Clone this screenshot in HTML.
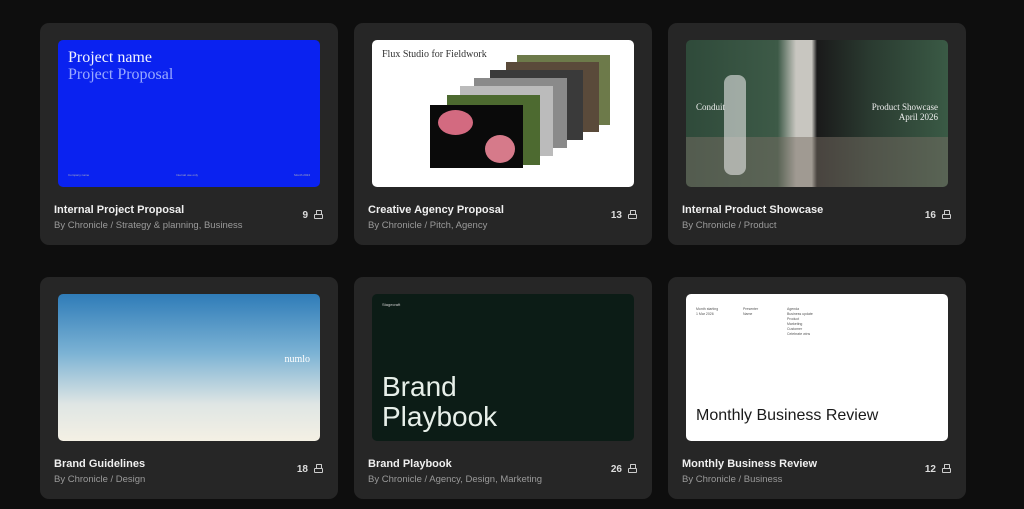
<!DOCTYPE html>
<html><head><meta charset="utf-8"><style>
body{margin:0;width:1024px;height:509px;background:#0e0e0e;overflow:hidden;font-family:"Liberation Sans",sans-serif;position:relative}
.card{position:absolute;width:298px;height:222px;background:#262626;border-radius:9px}
.th{position:absolute;left:18px;top:17px;width:262px;height:147px;border-radius:5px;overflow:hidden}
.t{position:absolute;left:14px;top:181px;color:#f0f0f0;font-weight:bold;font-size:11px}
.s{position:absolute;left:14px;top:197px;color:#9a9a9a;font-size:9.5px}
.n{position:absolute;right:30px;top:187px;color:#ddd;font-weight:bold;font-size:10px}
.ic{position:absolute;right:15px;top:187px;width:9px;height:9px}
.ic:before{content:"";position:absolute;left:1.5px;right:1.5px;top:0;height:3px;border:1.5px solid #ccc;border-bottom:none;border-radius:1px 1px 0 0}
.ic:after{content:"";position:absolute;left:0;right:0;top:4px;height:5px;border:1.5px solid #ccc;box-sizing:border-box;border-radius:1px}
.serif{font-family:"Liberation Serif",serif}
</style></head><body>
<div class="card" style="left:40px;top:23px">
 <div class="th" style="background:#0a22f0">
  <div class="serif" style="position:absolute;left:10px;top:9px;color:#f2f4ff;font-size:16px;line-height:17px">Project name<br><span style="color:#9aaaff">Project Proposal</span></div>
  <div style="position:absolute;left:10px;bottom:10px;font-size:3px;color:#aab">Company name</div>
  <div style="position:absolute;left:118px;bottom:10px;font-size:3px;color:#aab">Internal use only</div>
  <div style="position:absolute;right:10px;bottom:10px;font-size:3px;color:#aab">Month 2024</div>
 </div>
 <div class="t">Internal Project Proposal</div><div class="s">By Chronicle / Strategy &amp; planning, Business</div><div class="n">9</div><div class="ic"></div>
</div>
<div class="card" style="left:354px;top:23px">
 <div class="th" style="background:#fff">
  <div class="serif" style="position:absolute;left:10px;top:9px;color:#333;font-size:10px">Flux Studio for Fieldwork</div>
  <div style="position:absolute;left:145px;top:15px;width:93px;height:70px;background:#6d7a4a"></div>
  <div style="position:absolute;left:134px;top:22px;width:93px;height:70px;background:#5a4a3a"></div>
  <div style="position:absolute;left:118px;top:30px;width:93px;height:70px;background:#3a3a3a"></div>
  <div style="position:absolute;left:102px;top:38px;width:93px;height:70px;background:#8a8a8a"></div>
  <div style="position:absolute;left:88px;top:46px;width:93px;height:70px;background:#bbb"></div>
  <div style="position:absolute;left:75px;top:55px;width:93px;height:70px;background:#4d6a30"></div>
  <div style="position:absolute;left:58px;top:65px;width:93px;height:63px;background:#0a0a0a"><div style="position:absolute;left:8px;top:5px;width:35px;height:25px;background:#d36a80;border-radius:50%"></div><div style="position:absolute;left:55px;top:30px;width:30px;height:28px;background:#d67a8a;border-radius:50%"></div></div>
 </div>
 <div class="t">Creative Agency Proposal</div><div class="s">By Chronicle / Pitch, Agency</div><div class="n">13</div><div class="ic"></div>
</div>
<div class="card" style="left:668px;top:23px">
 <div class="th" style="background:linear-gradient(90deg,#2f4a3a 0%,#3d5a47 35%,#c8c6c0 42%,#c8c6c0 48%,#1a1a1a 50%,#2a3a30 70%,#3a5a45 100%)">
  <div style="position:absolute;left:0;right:0;bottom:0;height:50px;background:rgba(120,110,100,.5)"></div>
  <div style="position:absolute;left:38px;top:35px;width:22px;height:100px;background:rgba(230,230,230,.6);border-radius:8px"></div>
  <div class="serif" style="position:absolute;left:10px;top:62px;color:#eee;font-size:9px">Conduit</div>
  <div class="serif" style="position:absolute;right:10px;top:62px;color:#eee;font-size:9px;text-align:right">Product Showcase<br>April 2026</div>
 </div>
 <div class="t">Internal Product Showcase</div><div class="s">By Chronicle / Product</div><div class="n">16</div><div class="ic"></div>
</div>
<div class="card" style="left:40px;top:277px">
 <div class="th" style="background:linear-gradient(180deg,#2f7cb8 0%,#7bb2d4 40%,#dfe6e4 75%,#f4f0e4 100%)">
  <div class="serif" style="position:absolute;right:10px;top:60px;color:#fff;font-size:10px">numlo</div>
 </div>
 <div class="t">Brand Guidelines</div><div class="s">By Chronicle / Design</div><div class="n">18</div><div class="ic"></div>
</div>
<div class="card" style="left:354px;top:277px">
 <div class="th" style="background:#0c1c16">
  <div style="position:absolute;left:10px;top:8px;color:#ccc;font-size:4px">Stagecraft</div>
  <div style="position:absolute;left:10px;top:78px;color:#e8f0ea;font-size:28px;line-height:30px">Brand<br>Playbook</div>
 </div>
 <div class="t">Brand Playbook</div><div class="s">By Chronicle / Agency, Design, Marketing</div><div class="n">26</div><div class="ic"></div>
</div>
<div class="card" style="left:668px;top:277px">
 <div class="th" style="background:#fff">
  <div style="position:absolute;left:10px;top:13px;font-size:3.5px;color:#555;line-height:5px">Month starting<br>1 Mar 2026</div>
  <div style="position:absolute;left:57px;top:13px;font-size:3.5px;color:#555;line-height:5px">Presenter<br>Name</div>
  <div style="position:absolute;left:101px;top:13px;font-size:3.5px;color:#555;line-height:5px">Agenda<br>Business update<br>Product<br>Marketing<br>Customer<br>Celebrate wins</div>
  <div style="position:absolute;left:10px;top:113px;color:#1a1a1a;font-size:16px">Monthly Business Review</div>
 </div>
 <div class="t">Monthly Business Review</div><div class="s">By Chronicle / Business</div><div class="n">12</div><div class="ic"></div>
</div>
</body></html>
